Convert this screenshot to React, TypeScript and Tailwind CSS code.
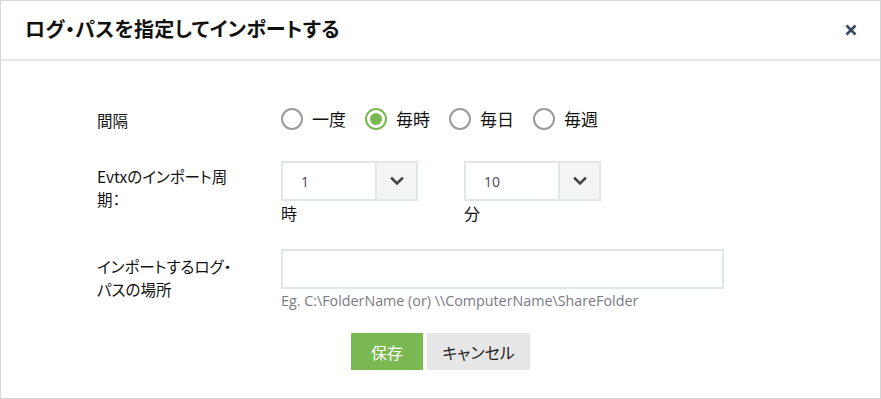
import { useState } from 'react'

const font = "font-['Meiryo_UI','Noto_Sans_CJK_JP',sans-serif] [font-feature-settings:'palt']"

const intervals = ['一度', '毎時', '毎日', '毎週']

function Radio({ label, checked, onClick }: { label: string; checked: boolean; onClick: () => void }) {
  return (
    <button type="button" onClick={onClick} className="flex items-center gap-[9px] mr-[19px]">
      <span
        className={
          'w-[22px] h-[22px] rounded-full border-2 flex items-center justify-center ' +
          (checked ? 'border-[#7ab851]' : 'border-[#9a9a9a]')
        }
      >
        {checked && <span className="w-[12px] h-[12px] rounded-full bg-[#7ab851]" />}
      </span>
      <span className="text-[17px] text-[#111]">{label}</span>
    </button>
  )
}

function Chevron() {
  return (
    <svg width="14" height="10" viewBox="0 0 14 10" fill="none">
      <path d="M2 2.5 L7 7.5 L12 2.5" stroke="#444" strokeWidth="2.6" strokeLinecap="square" />
    </svg>
  )
}

function Select({ value, unit }: { value: string; unit: string }) {
  return (
    <div className="w-[137px]">
      <div className="flex h-[40px] border-2 border-[#e1e6e6]">
        <div className="flex-1 flex items-center pl-[18px] text-[14px] text-[#5b4a6b] font-['Noto_Sans',sans-serif]">
          {value}
        </div>
        <div className="w-[41px] border-l-2 border-[#e1e6e6] bg-[#f4f4f4] flex items-center justify-center">
          <Chevron />
        </div>
      </div>
      <div className="text-[16px] text-[#111] leading-[22px] mt-[1px]">{unit}</div>
    </div>
  )
}

export default function App() {
  const [interval, setInterval] = useState('毎時')

  return (
    <div className={'w-[881px] h-[399px] bg-white border border-[#d6d6d6] ' + font}>
      <div className="h-[60px] border-b-2 border-[#e6e6e6] flex items-center justify-between pl-[24px] pr-[23px]">
        <h1 className="text-[20px] tracking-[0.3px] font-bold text-[#111] -mt-[3px]">ログ・パスを指定してインポートする</h1>
        <svg width="12" height="12" viewBox="0 0 12 12" className="-mt-[1px]">
          <path d="M1.5 1.5 L10.5 10.5 M10.5 1.5 L1.5 10.5" stroke="#3b4a5a" strokeWidth="2.6" />
        </svg>
      </div>

      <div className="pl-[96px] pt-[46px] grid grid-cols-[184px_1fr] text-[15.5px] text-[#111]">
        <div className="leading-[23px] pt-[2px]">間隔</div>
        <div className="flex items-center h-[24px]">
          {intervals.map((i) => (
            <Radio key={i} label={i} checked={interval === i} onClick={() => setInterval(i)} />
          ))}
        </div>

        <div className="leading-[23px] mt-[33px]">
          Evtxのインポート周
          <br />
          期：
        </div>
        <div className="flex gap-[46px] mt-[29px]">
          <Select value="1" unit="時" />
          <Select value="10" unit="分" />
        </div>

        <div className="leading-[23px] mt-[31px]">
          インポートするログ・
          <br />
          パスの場所
        </div>
        <div className="mt-[25px]">
          <input type="text" className="w-[443px] h-[40px] border-2 border-[#e1e6e6] outline-none px-2" />
          <div className="text-[14.3px] text-[#7a7a85] mt-[1px] font-['Open_Sans',sans-serif]">
            Eg. C:\FolderName (or) \\ComputerName\ShareFolder
          </div>
        </div>
      </div>

      <div className="flex justify-center gap-[4px] mt-[22px]">
        <button className="w-[72px] h-[37px] bg-[#7ab851] text-white text-[16px]">保存</button>
        <button className="w-[103px] h-[37px] bg-[#e6e6e6] text-[#222] text-[16px]">キャンセル</button>
      </div>
    </div>
  )
}
